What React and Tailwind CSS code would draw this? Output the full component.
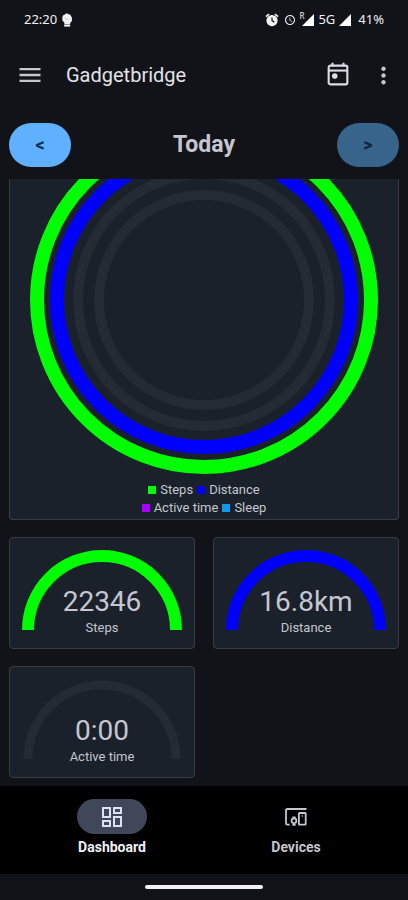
import { useState } from "react";
import { MdMenu, MdMoreVert, MdAccessTime } from "react-icons/md";

const rings = [
    { name: "Steps", r: 167, width: 14, color: "#00ff00" },
    { name: "Distance", r: 147, width: 14, color: "#0000ff" },
    { name: "Active time", r: 126, width: 10, color: "#242b34" },
    { name: "Sleep", r: 105, width: 10, color: "#242b34" },
];

const gauges = [
    { label: "Steps", value: "22346", width: 12, color: "#00ff00" },
    { label: "Distance", value: "16.8km", width: 12, color: "#0000ff" },
    { label: "Active time", value: "0:00", width: 9, color: "#242b34" },
];

const FistIcon = () => (
    <svg viewBox="0 0 12 14" className="w-3 h-3.5" fill="#f1f1f4" aria-hidden="true">
        <path d="M3.4 1.8 5.6.3l1.9 1 1.8.5.8 1.5.8 1.2v3.4L9.2 10v1H3.4V9.8L1.4 7.4V3.8l.8-1.6z" />
        <path d="M3.2 11.4h6v2.2h-6z" />
        <path d="M3.8 5.2 6 6.4l2.2-.6" stroke="#b5b6bc" strokeWidth="0.5" fill="none" />
    </svg>
);

const AlarmIcon = () => (
    <svg viewBox="0 0 24 24" className="w-3.5 h-3.5" aria-hidden="true">
        <circle cx="12" cy="13" r="9.6" fill="#f1f1f4" />
        <path d="M1.6 6.4 7 2M22.4 6.4 17 2" stroke="#f1f1f4" strokeWidth="2.8" />
        <path d="M12 7.5V13l4 3" stroke="#111318" strokeWidth="2" fill="none" />
    </svg>
);

const SignalIcon = () => (
    <svg viewBox="0 0 12 12" className="w-3 h-3" fill="#ffffff" aria-hidden="true">
        <path d="M12 0v12H0z" />
    </svg>
);

const CalendarIcon = () => (
    <svg viewBox="0 0 24 24" className="w-7 h-7" fill="none" stroke="#dcdde5" strokeWidth="1.8" aria-hidden="true">
        <rect x="4" y="4" width="16" height="16" rx="1.4" />
        <path d="M4 8.2h16" />
        <path d="M7.3 1.4v3M16.7 1.4v3" />
        <circle cx="9.2" cy="12.9" r="2.4" fill="#dcdde5" stroke="none" />
    </svg>
);

const DashboardIcon = () => (
    <svg viewBox="0 0 20 20" className="w-5 h-5" fill="none" stroke="currentColor" strokeWidth="2" aria-hidden="true">
        <path d="M1 1h7v9H1zM12 1h7v5h-7zM12 10h7v9h-7zM1 14h7v5H1z" />
    </svg>
);

const DevicesIcon = () => (
    <svg viewBox="0 0 22 18" className="w-[22px] h-[18px]" fill="none" stroke="currentColor" strokeWidth="1.8" aria-hidden="true">
        <path d="M21.5 1H2.4Q1 1 1 2.4v12.8q0 1.4 1.4 1.4h2.2" />
        <rect x="13.9" y="5" width="6.8" height="11.7" rx="0.6" />
        <circle cx="9" cy="12.8" r="2.4" />
        <path d="M7.4 9.4h3.2M7.4 16.8h3.2" />
        <circle cx="17.3" cy="8" r="0.8" fill="currentColor" stroke="none" />
    </svg>
);

const StatusBar = () => (
    <div className="flex items-center justify-between h-10 px-6 text-[13px] text-[#f1f1f4] font-['Noto_Sans',sans-serif]">
        <div className="flex items-center gap-1">
            <span>22:20</span>
            <FistIcon />
        </div>
        <div className="flex items-center">
            <AlarmIcon />
            <MdAccessTime className="w-3 h-3 ml-[5px]" />
            <div className="relative ml-1 pl-0.5">
                <span className="absolute -left-px -top-0.5 text-[8px] leading-none">R</span>
                <SignalIcon />
            </div>
            <span className="mx-1">5G</span>
            <SignalIcon />
            <span className="ml-[7px]">41%</span>
        </div>
    </div>
);

const Gauge = ({ label, value, width, color }) => (
    <div className="relative px-3 pt-3 pb-[18px] rounded-sm border border-[#3a3c44] bg-[#1a212b]">
        <svg viewBox="0 0 160 80" className="block w-full" aria-hidden="true">
            <path d="M6 80a74 74 0 0 1 148 0" fill="none" stroke={color} strokeWidth={width} />
        </svg>
        <div className="absolute inset-x-0 bottom-2.5 text-center">
            <p className="text-[28px] leading-8">{value}</p>
            <p className="text-[13px] leading-5">{label}</p>
        </div>
    </div>
);

const Legend = ({ color, children }) => (
    <span className="flex items-center gap-1">
        <span className={"w-2 h-2 " + color}></span>
        {children}
    </span>
);

const NavButton = ({ active, label, onClick, children }) => (
    <button onClick={onClick} className="flex flex-col items-center flex-1 cursor-pointer">
        <span className={"flex items-center justify-center w-[70px] h-[35px] rounded-full " + (active ? "bg-[#3f4759] text-[#dbe2f9]" : "")}>
            {children}
        </span>
        <span className={"mt-1 leading-[18px] " + (active ? "text-[#f0f0f5]" : "")}>{label}</span>
    </button>
);

const App = () => {
    const [tab, setTab] = useState("dashboard");

    return (
        <div className="flex flex-col min-h-screen bg-[#111318] text-[#c5c6d0] font-[Roboto,sans-serif]">
            <StatusBar />

            {/* App bar */}
            <header className="flex items-center h-[70px] pl-4 pr-[11px]">
                <button aria-label="Menu" className="cursor-pointer">
                    <MdMenu className="w-7 h-7" />
                </button>
                <h1 className="grow ml-[22px] text-xl text-[#e2e2e9]">Gadgetbridge</h1>
                <button aria-label="Calendar" className="cursor-pointer">
                    <CalendarIcon />
                </button>
                <button aria-label="More options" className="ml-[18px] cursor-pointer">
                    <MdMoreVert className="w-[27px] h-[27px]" />
                </button>
            </header>

            {/* Day picker */}
            <div className="flex items-center justify-between px-[9px] pt-[13px] pb-3">
                <button aria-label="Previous day" className="w-[62px] h-11 rounded-full bg-[#5fb1ff] text-[#0b2f52] text-lg font-bold cursor-pointer">
                    &lt;
                </button>
                <h2 className="text-[23px] leading-9 font-bold">Today</h2>
                <button aria-label="Next day" disabled className="w-[62px] h-11 rounded-full bg-[#38638b] text-[#0b2440] text-lg font-bold">
                    &gt;
                </button>
            </div>

            <main className="grow px-[9px] pb-2">
                {/* Goal rings, scrolled part way under the day picker */}
                <section className="px-[19px] pb-0.5 rounded-b-sm border border-t-0 border-[#3a3c44] bg-[#1a212b]">
                    <svg viewBox="0 0 350 296" className="w-full" aria-hidden="true">
                        {rings.map((ring) => (
                            <circle key={ring.name} cx="175" cy="121" r={ring.r} fill="none" stroke={ring.color} strokeWidth={ring.width} />
                        ))}
                    </svg>
                    <div className="pt-1.5 text-[13px] leading-[18px]">
                        <div className="flex justify-center gap-1">
                            <Legend color="bg-[#00ff00]">Steps</Legend>
                            <Legend color="bg-[#0000ff]">Distance</Legend>
                        </div>
                        <div className="flex justify-center gap-1">
                            <Legend color="bg-[#aa00ff]">Active time</Legend>
                            <Legend color="bg-[#1199ee]">Sleep</Legend>
                        </div>
                    </div>
                </section>

                <section className="grid grid-cols-2 gap-x-[18px] gap-y-[17px] mt-[17px]">
                    {gauges.map((gauge) => (
                        <Gauge key={gauge.label} {...gauge} />
                    ))}
                </section>
            </main>

            {/* Bottom navigation */}
            <nav className="flex h-[88px] px-5 pt-[13px] bg-black text-sm font-bold">
                <NavButton label="Dashboard" active={tab === "dashboard"} onClick={() => setTab("dashboard")}>
                    <DashboardIcon />
                </NavButton>
                <NavButton label="Devices" active={tab === "devices"} onClick={() => setTab("devices")}>
                    <DevicesIcon />
                </NavButton>
            </nav>

            <div className="flex justify-center h-[26px] pt-[11px]">
                <div className="w-[118px] h-1 rounded-full bg-[#f1f1f4]"></div>
            </div>
        </div>
    );
};

export default App;
